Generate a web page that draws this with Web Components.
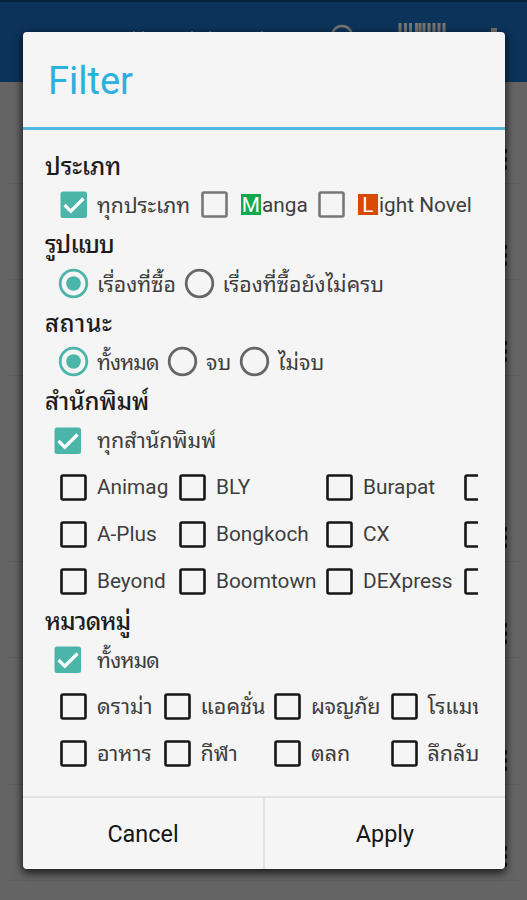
<!DOCTYPE html>
<html lang="th">
  <head>
    <meta charset="UTF-8" />
    <meta name="viewport" content="width=device-width, initial-scale=1.0" />
    <title>Filter</title>
    <style>
      body {
        margin: 0;
        height: 900px;
        overflow: hidden;
        position: relative;
        background: #646464;
        font-family: Roboto, "Noto Sans Thai Looped", "Droid Sans Thai", Loma, Waree, Garuda, "Noto Sans", sans-serif;
      }

      filter-dialog {
        position: absolute;
        left: 23px;
        top: 32px;
      }
    </style>
  </head>
  <body>
    <library-page></library-page>

    <filter-dialog>
      <span slot="title">Filter</span>

      <filter-section>
        <span slot="heading">ประเภท</span>
        <option-row style="--cols: 140.5px 117px 170px">
          <option-item type="checkbox" checked style="--size: 21.2px; --lift: 3px">ทุกประเภท</option-item>
          <option-item type="checkbox" tone="gray" style="--gap: 13px"><letter-badge style="--badge: #12a84b">M</letter-badge>anga</option-item>
          <option-item type="checkbox" tone="gray" style="--gap: 13px"><letter-badge style="--badge: #d64a06">L</letter-badge>ight Novel</option-item>
        </option-row>
      </filter-section>

      <filter-section style="--spacing: -0.9px">
        <span slot="heading">รูปแบบ</span>
        <option-row style="--cols: 125.5px 220px; --size: 21.3px; --lift: 3px; --spacing: 0px">
          <option-item type="radio" checked>เรื่องที่ซื้อ</option-item>
          <option-item type="radio">เรื่องที่ซื้อยังไม่ครบ</option-item>
        </option-row>
      </filter-section>

      <filter-section style="--spacing: 0.8px">
        <span slot="heading">สถานะ</span>
        <option-row style="--cols: 109px 72px 100px; --size: 21.3px; --lift: 3px">
          <option-item type="radio" checked style="--spacing: -0.9px">ทั้งหมด</option-item>
          <option-item type="radio" style="--spacing: 0px">จบ</option-item>
          <option-item type="radio" style="--spacing: 0px">ไม่จบ</option-item>
        </option-row>
      </filter-section>

      <filter-section>
        <span slot="heading">สำนักพิมพ์</span>
        <option-row style="--indent: 9px; --gap: 16px; --size: 21.5px; --lift: 3px">
          <option-item type="checkbox" checked>ทุกสำนักพิมพ์</option-item>
        </option-row>
        <option-row style="--cols: 119px 147px 138px 100px">
          <option-item type="checkbox">Animag</option-item>
          <option-item type="checkbox">BLY</option-item>
          <option-item type="checkbox">Burapat</option-item>
          <option-item type="checkbox"></option-item>
          <option-item type="checkbox">A-Plus</option-item>
          <option-item type="checkbox">Bongkoch</option-item>
          <option-item type="checkbox">CX</option-item>
          <option-item type="checkbox"></option-item>
          <option-item type="checkbox">Beyond</option-item>
          <option-item type="checkbox">Boomtown</option-item>
          <option-item type="checkbox">DEXpress</option-item>
          <option-item type="checkbox"></option-item>
        </option-row>
      </filter-section>

      <filter-section style="--spacing: -0.8px">
        <span slot="heading">หมวดหมู่</span>
        <option-row style="--indent: 9px; --gap: 16px; --size: 21.3px; --lift: 4px">
          <option-item type="checkbox" checked>ทั้งหมด</option-item>
        </option-row>
        <option-row style="--cols: 103.5px 110.5px 116.5px 110px; --size: 21.5px; --lift: 5px; --spacing: 0px">
          <option-item type="checkbox">ดราม่า</option-item>
          <option-item type="checkbox">แอคชั่น</option-item>
          <option-item type="checkbox" style="--spacing: -0.4px">ผจญภัย</option-item>
          <option-item type="checkbox">โรแมน</option-item>
          <option-item type="checkbox">อาหาร</option-item>
          <option-item type="checkbox">กีฬา</option-item>
          <option-item type="checkbox">ตลก</option-item>
          <option-item type="checkbox">ลึกลับ</option-item>
        </option-row>
      </filter-section>

      <span slot="cancel">Cancel</span>
      <span slot="apply">Apply</span>
    </filter-dialog>

    <template id="page-template">
      <style>
        :host {
          display: block;
        }

        .bar {
          display: flex;
          justify-content: flex-end;
          box-sizing: border-box;
          height: 82px;
          padding-top: 21px;
          border-top: 2px solid #08243c;
          background: #0c345b;
        }

        .bar svg {
          display: block;
        }

        .row {
          display: flex;
          justify-content: flex-end;
          align-items: flex-end;
          box-sizing: border-box;
          height: 96px;
          margin: 0 7px;
          padding: 0 13px 11px 0;
          border-bottom: 1px solid #5d5d5d;
        }

        .row.first {
          height: 102px;
        }

        .row.double {
          height: 186px;
        }

        .row.tall {
          height: 127px;
        }

        .dots {
          width: 5px;
          height: 25px;
          background: radial-gradient(circle, #0c0c0c 2.2px, transparent 3px) 0 0 / 5px 8.3px;
        }
      </style>
      <div class="bar">
        <svg width="400" height="40" fill="none" stroke="#77756f">
          <path d="M7 8v4M16 8v4M65 8v4M83 8l-1 4M135 8l1 4" stroke-width="2" stroke="#5b6873" />
          <circle cx="215" cy="13" r="10" stroke-width="2.5" />
          <path d="M273-1V30M278.500-1V30M283.500-1V30M289.500-1V30M293-1V30M297-1V30M302-1V30M307-1V30M312-1V30M317-1V30" stroke-width="3" />
          <path d="M367 5v7" stroke-width="6" />
        </svg>
      </div>
      <div class="row first"><div class="dots"></div></div>
      <div class="row"><div class="dots"></div></div>
      <div class="row"><div class="dots"></div></div>
      <div class="row double"><div class="dots"></div></div>
      <div class="row"><div class="dots"></div></div>
      <div class="row tall"><div class="dots"></div></div>
      <div class="row"><div class="dots"></div></div>
    </template>

    <template id="dialog-template">
      <style>
        :host {
          display: flex;
          flex-direction: column;
          box-sizing: border-box;
          width: 482px;
          height: 837px;
          border-radius: 4px;
          background: #f5f5f5;
          box-shadow: 0 3px 9px 1px rgba(0, 0, 0, 0.75);
          overflow: hidden;
        }

        header {
          display: flex;
          align-items: center;
          box-sizing: border-box;
          height: 97.5px;
          padding: 3px 0 0 25px;
          border-bottom: 3px solid #56b5dc;
          color: #2cb0de;
          font-size: 38px;
        }

        main {
          flex: 1;
          margin: 20px 27px 0 22px;
          overflow: hidden;
        }

        footer {
          display: grid;
          grid-template-columns: 240px 1fr;
          height: 71px;
          border-top: 2px solid #e2e2e2;
        }

        .button {
          display: flex;
          align-items: center;
          justify-content: center;
          color: #161616;
          font-size: 23.4px;
        }

        .button + .button {
          border-left: 2px solid #e2e2e2;
        }
      </style>
      <header><slot name="title"></slot></header>
      <main><slot></slot></main>
      <footer>
        <div class="button"><slot name="cancel"></slot></div>
        <div class="button"><slot name="apply"></slot></div>
      </footer>
    </template>

    <template id="section-template">
      <style>
        :host {
          display: block;
        }

        .heading {
          display: flex;
          align-items: center;
          box-sizing: border-box;
          height: 31.5px;
          padding-bottom: 3px;
          color: #1c1c1c;
          font-size: 24px;
          font-weight: 500;
          letter-spacing: var(--spacing, 0);
          white-space: nowrap;
        }
      </style>
      <div class="heading"><slot name="heading"></slot></div>
      <slot></slot>
    </template>

    <template id="row-template">
      <style>
        :host {
          display: grid;
          grid-template-columns: var(--cols, 1fr);
          grid-auto-rows: 47px;
          padding-left: var(--indent, 15px);
        }
      </style>
      <slot></slot>
    </template>

    <template id="item-template">
      <style>
        :host {
          display: flex;
          align-items: center;
          gap: var(--gap, 10px);
          color: #3e3e3e;
          font-size: var(--size, 20.8px);
          letter-spacing: var(--spacing, 0);
          white-space: nowrap;
        }

        svg {
          flex: none;
          display: block;
          overflow: visible;
        }

        .label {
          display: flex;
          align-items: center;
          padding-bottom: var(--lift, 0);
        }
      </style>
      <svg width="27" height="27" fill="none"></svg>
      <span class="label"><slot></slot></span>
    </template>

    <template id="badge-template">
      <style>
        :host {
          display: inline-flex;
          align-items: center;
          justify-content: center;
          width: 20.5px;
          height: 21px;
          margin-right: 1px;
          background: var(--badge);
          color: #fff;
        }
      </style>
      <slot></slot>
    </template>

    <script>
      const SHAPES = {
        checkboxOn:
          '<rect x="0.500" y="0.500" width="26.500" height="26.500" rx="2.500" fill="#4cb5a9" />' +
          '<path d="M4.500 14L10.800 20.200L23.500 7.500" stroke="#fff" stroke-width="3.200" />',
        checkboxOff:
          '<rect x="1.500" y="1.500" width="24" height="24" rx="1.500" stroke="COLOR" stroke-width="2.600" />',
        radioOn:
          '<circle cx="13.500" cy="13.500" r="13.300" stroke="#4cb5a9" stroke-width="2.800" />' +
          '<circle cx="13.500" cy="13.500" r="7.300" fill="#4cb5a9" />',
        radioOff:
          '<circle cx="13.500" cy="13.500" r="13.300" stroke="#666" stroke-width="2.800" />',
      };

      class TemplateElement extends HTMLElement {
        constructor() {
          super();
          const template = document.getElementById(this.constructor.templateId);
          this.attachShadow({ mode: "open" }).appendChild(
            template.content.cloneNode(true)
          );
        }
      }

      class LibraryPage extends TemplateElement {
        static templateId = "page-template";
      }

      class FilterDialog extends TemplateElement {
        static templateId = "dialog-template";
      }

      class FilterSection extends TemplateElement {
        static templateId = "section-template";
      }

      class OptionRow extends TemplateElement {
        static templateId = "row-template";
      }

      class LetterBadge extends TemplateElement {
        static templateId = "badge-template";
      }

      class OptionItem extends TemplateElement {
        static templateId = "item-template";

        connectedCallback() {
          const state = this.hasAttribute("checked") ? "On" : "Off";
          const color = this.getAttribute("tone") === "gray" ? "#777" : "#161616";
          this.shadowRoot.querySelector("svg").innerHTML = SHAPES[
            this.getAttribute("type") + state
          ].replace("COLOR", color);
        }
      }

      customElements.define("library-page", LibraryPage);
      customElements.define("filter-dialog", FilterDialog);
      customElements.define("filter-section", FilterSection);
      customElements.define("option-row", OptionRow);
      customElements.define("option-item", OptionItem);
      customElements.define("letter-badge", LetterBadge);
    </script>
  </body>
</html>
